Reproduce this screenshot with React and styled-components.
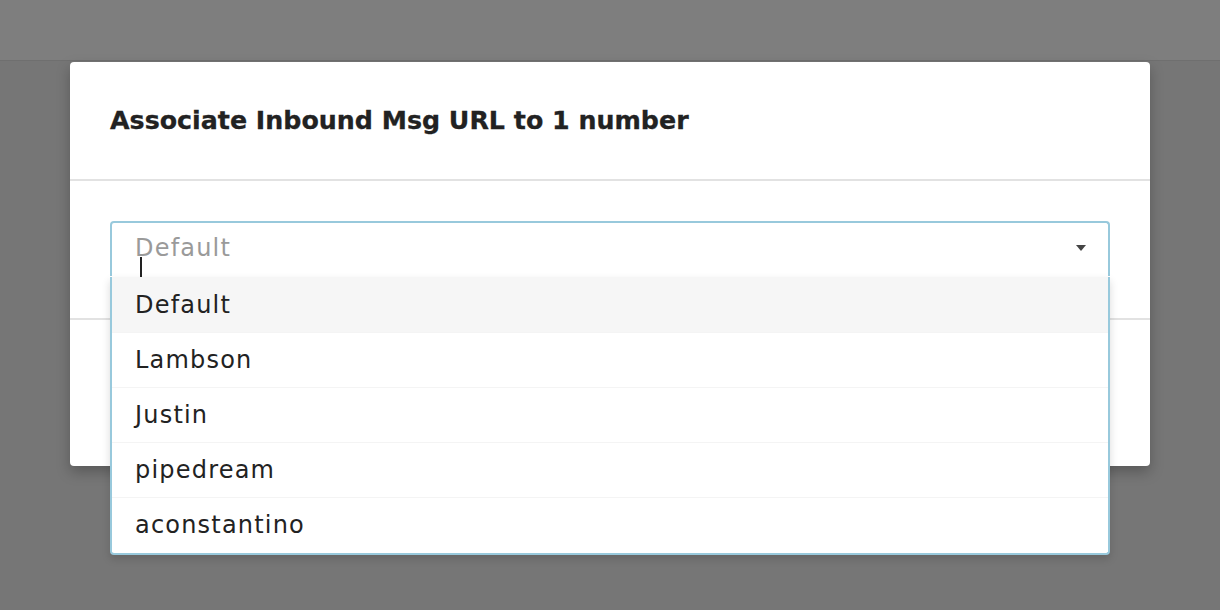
import styled, { createGlobalStyle } from 'styled-components';

const GlobalStyle = createGlobalStyle`
  html, body {
    margin: 0;
    padding: 0;
    background: #757575;
    font-family: "DejaVu Sans", "Noto Sans", sans-serif;
  }
`;

const Page = styled.div`
  width: 1220px;
  height: 610px;
  overflow: hidden;
  background: #767676;
`;

const TopBar = styled.div`
  height: 60px;
  background: #7e7e7e;
  border-bottom: 1px solid #6f6f6f;
`;

const Stage = styled.div`
  padding: 1px 70px 0;
`;

const Modal = styled.div`
  width: 1080px;
  background: #fff;
  border-radius: 4px;
  box-shadow: 0 6px 14px rgba(0, 0, 0, 0.25);
`;

const Header = styled.div`
  height: 119px;
  box-sizing: border-box;
  display: flex;
  align-items: center;
  padding: 0 40px;
  border-bottom: 2px solid #e2e2e2;
`;

const Title = styled.h2`
  margin: 0;
  font-size: 25.3px;
  font-weight: 700;
  color: #222;
  -webkit-text-stroke: 0.3px #222;
`;

const Body = styled.div`
  padding: 40px 40px 42px;
  border-bottom: 2px solid #e2e2e2;
`;

const SelectWrap = styled.div`
  position: relative;
`;

const Control = styled.div`
  height: 55px;
  box-sizing: border-box;
  border: 2px solid #98c9dc;
  border-bottom: none;
  border-radius: 4px 4px 0 0;
  display: flex;
  align-items: center;
  padding: 0 22px 3px 23px;
  position: relative;
`;

const Placeholder = styled.span`
  flex: 1;
  font-size: 24px;
  color: #9a9a9a;
  letter-spacing: 1.2px;
`;

const Caret = styled.span`
  position: absolute;
  left: 28px;
  top: 34px;
  width: 2px;
  height: 20px;
  background: #222;
`;

const Arrow = styled.span`
  width: 0;
  height: 0;
  border-left: 5px solid transparent;
  border-right: 5px solid transparent;
  border-top: 6px solid #444;
`;

const Menu = styled.ul`
  position: absolute;
  left: 0;
  right: 0;
  top: 56px;
  margin: 0;
  padding: 0 0 1px;
  list-style: none;
  background: #fff;
  border: 2px solid #98c9dc;
  border-top: none;
  border-radius: 0 0 4px 4px;
  box-shadow: 0 4px 8px rgba(0, 0, 0, 0.15);
  z-index: 10;
`;

const Option = styled.li`
  height: 55px;
  display: flex;
  align-items: center;
  padding: 0 23px;
  font-size: 24px;
  letter-spacing: 1.2px;
  color: #222;
  background: ${(p) => (p.$active ? '#f6f6f6' : '#fff')};
  border-top: ${(p) => (p.$first ? 'none' : '1px solid #f4f4f4')};
  box-sizing: border-box;
`;

const Footer = styled.div`
  height: 146px;
`;

const options = ['Default', 'Lambson', 'Justin', 'pipedream', 'aconstantino'];

export default function App() {
  return (
    <Page>
      <GlobalStyle />
      <TopBar />
      <Stage>
        <Modal>
          <Header>
            <Title>Associate Inbound Msg URL to 1 number</Title>
          </Header>
          <Body>
            <SelectWrap>
              <Control>
                <Placeholder>Default</Placeholder>
                <Caret />
                <Arrow />
              </Control>
              <Menu>
                {options.map((o, i) => (
                  <Option key={o} $active={i === 0} $first={i === 0}>
                    {o}
                  </Option>
                ))}
              </Menu>
            </SelectWrap>
          </Body>
          <Footer />
        </Modal>
      </Stage>
    </Page>
  );
}
